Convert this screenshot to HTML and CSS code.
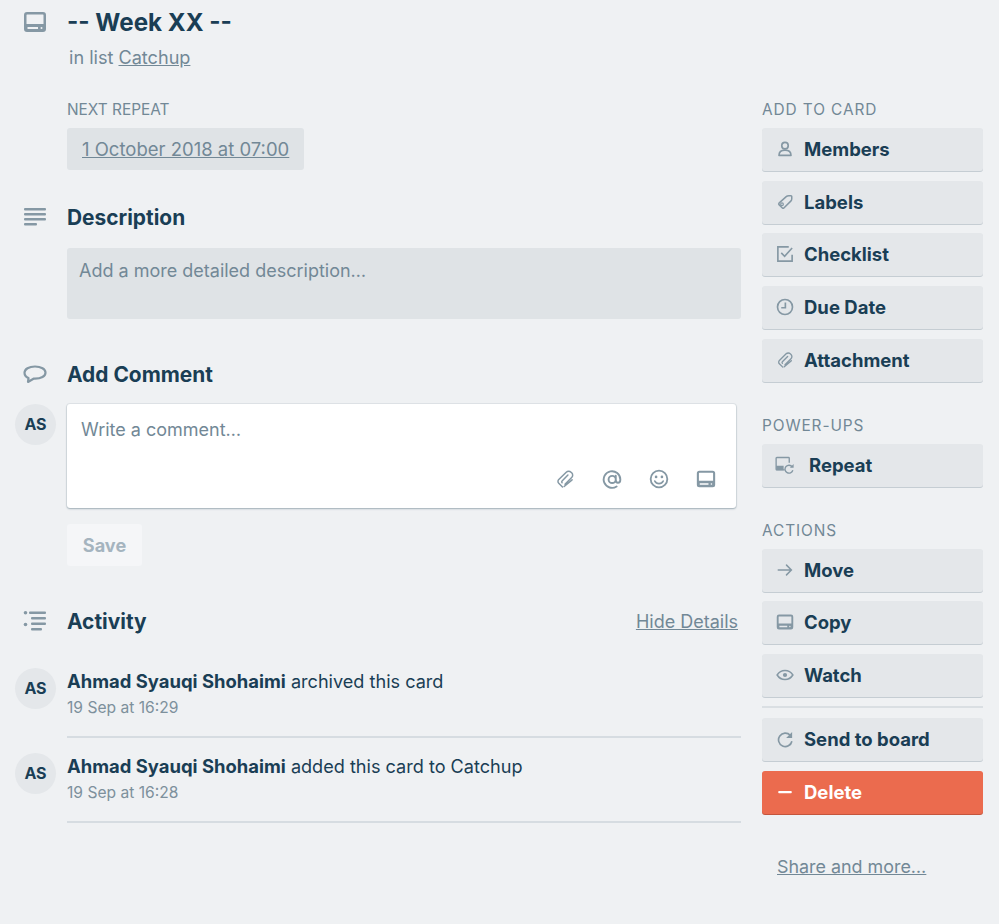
FILE: index.html
```html
<!DOCTYPE html>
<html lang="en">
<head>
    <meta charset="UTF-8">
    <meta name="viewport" content="width=device-width, initial-scale=1.0">
    <title>-- Week XX --</title>
    <link rel="stylesheet" href="styles.css">
</head>
<body>
    <svg class="defs" width="0" height="0">
        <symbol id="i-card" viewBox="0 0 24 24"><path fill-rule="evenodd" d="M4 2h16a3 3 0 0 1 3 3v14a3 3 0 0 1-3 3H4a3 3 0 0 1-3-3V5a3 3 0 0 1 3-3zm0 2.500a.5.5 0 0 0-.5.5v9h17V5a.5.500 0 0 0-.5-.5H4zM4.500 17v2h10.500v-2H4.500zM18.500 17a1 1 0 1 0 0 2 1 1 0 0 0 0-2z"/></symbol>
        <symbol id="i-clip" viewBox="0 0 24 24"><path fill="none" stroke="currentColor" stroke-width="1.800" stroke-linecap="round" d="M9 21.500l-4.500-4.500a3 3 0 0 1 0-4.300L13.500 3.800a4 4 0 0 1 5.700 0l.8.8a4 4 0 0 1 0 5.700l-8 8M8.500 16.500a1.600 1.600 0 0 1 0-2.200l7-7M11 21l9.500-8"/></symbol>
    </svg>

    <div class="window">
        <!-- Main column -->
        <div class="main">
            <div class="row title-row">
                <div class="gutter"><svg class="icon icon-lg"><use href="#i-card"/></svg></div>
                <div class="content">
                    <h1>-- Week XX --</h1>
                    <p class="in-list">in list <a href="#">Catchup</a></p>
                </div>
            </div>

            <div class="row repeat-row">
                <div class="gutter"></div>
                <div class="content">
                    <h3 class="label">NEXT REPEAT</h3>
                    <a href="#" class="date-btn">1 October 2018 at 07:00</a>
                </div>
            </div>

            <div class="row desc-row">
                <div class="gutter">
                    <svg class="icon icon-lg" viewBox="0 0 24 24"><rect x="1" y="3" width="22" height="2.400" rx="1"/><rect x="1" y="8" width="22" height="2.400" rx="1"/><rect x="1" y="13" width="22" height="2.400" rx="1"/><rect x="1" y="18" width="13" height="2.400" rx="1"/></svg>
                </div>
                <div class="content">
                    <h2>Description</h2>
                    <div class="fake-textarea">Add a more detailed description…</div>
                </div>
            </div>

            <div class="row comment-head">
                <div class="gutter">
                    <svg class="icon icon-lg" viewBox="0 0 24 24"><path fill="none" stroke="currentColor" stroke-width="2.200" stroke-linejoin="round" d="M12 4.500c-6 0-10.500 2.500-10.500 6.300 0 2.400 1.500 4.200 4 5.200l-.5 4 5.500-3.300H12c6 0 10.500-2.500 10.500-6 0-3.700-4.500-6.200-10.500-6.200z"/></svg>
                </div>
                <div class="content"><h2>Add Comment</h2></div>
            </div>

            <div class="row comment-row">
                <div class="gutter"><div class="avatar">AS</div></div>
                <div class="content">
                    <div class="comment-box">
                        <div class="placeholder">Write a comment…</div>
                        <div class="comment-tools">
                            <svg class="icon icon-tool"><use href="#i-clip"/></svg>
                            <svg class="icon icon-tool" viewBox="0 0 24 24"><path fill="none" stroke="currentColor" stroke-width="2.300" stroke-linecap="round" d="M17.500 21a10 10 0 1 1 4.500-8.500c0 2.500-1 4-2.800 4s-2.700-1.500-2.700-3.500V8M16.500 12.500a4.300 4.300 0 1 1-8.600 0 4.300 4.300 0 0 1 8.600 0z"/></svg>
                            <svg class="icon icon-tool" viewBox="0 0 24 24"><circle cx="12" cy="12" r="10" fill="none" stroke="currentColor" stroke-width="2.200"/><circle cx="8.500" cy="9.500" r="1.600"/><circle cx="15.500" cy="9.500" r="1.600"/><path fill="none" stroke="currentColor" stroke-width="2" stroke-linecap="round" d="M7 14.500c1 2 2.800 3 5 3s4-1 5-3"/></svg>
                            <svg class="icon icon-tool"><use href="#i-card"/></svg>
                        </div>
                    </div>
                    <button class="save-btn">Save</button>
                </div>
            </div>

            <div class="row activity-head">
                <div class="gutter">
                    <svg class="icon icon-lg" viewBox="0 0 24 24"><circle cx="2.500" cy="3.700" r="1.800"/><circle cx="2.500" cy="15.500" r="1.800"/><rect x="6" y="2.500" width="17" height="2.400" rx="1"/><rect x="8" y="8" width="15" height="2.400" rx="1"/><rect x="8" y="13.500" width="15" height="2.400" rx="1"/><rect x="8" y="19" width="11" height="2.400" rx="1"/></svg>
                </div>
                <div class="content activity-title">
                    <h2>Activity</h2>
                    <a href="#" class="muted-link">Hide Details</a>
                </div>
            </div>

            <div class="row entry">
                <div class="gutter"><div class="avatar">AS</div></div>
                <div class="content entry-body">
                    <p><b>Ahmad Syauqi Shohaimi</b> archived this card</p>
                    <p class="time">19 Sep at 16:29</p>
                </div>
            </div>
            <div class="row entry">
                <div class="gutter"><div class="avatar">AS</div></div>
                <div class="content entry-body">
                    <p><b>Ahmad Syauqi Shohaimi</b> added this card to Catchup</p>
                    <p class="time">19 Sep at 16:28</p>
                </div>
            </div>
        </div>

        <!-- Sidebar -->
        <div class="side">
            <h3 class="label side-label">ADD TO CARD</h3>
            <a href="#" class="btn"><svg class="icon" viewBox="0 0 24 24"><circle cx="12" cy="7.500" r="4.300" fill="none" stroke="currentColor" stroke-width="2.200"/><path fill="none" stroke="currentColor" stroke-width="2.200" stroke-linejoin="round" d="M4 20.500c0-4.500 3-7 8-7s8 2.500 8 7z"/></svg>Members</a>
            <a href="#" class="btn"><svg class="icon" viewBox="0 0 24 24"><path fill="none" stroke="currentColor" stroke-width="2" stroke-linejoin="round" d="M14 4.500c1-1 2-1 3-1l3 0c.5 0 1 .5 1 1v3c0 1 0 2-1 3l-9.500 9.500a1.500 1.500 0 0 1-2 0l-4.500-4.500a1.500 1.500 0 0 1 0-2z"/><circle cx="8" cy="15" r="1.800" fill="none" stroke="currentColor" stroke-width="1.600"/></svg>Labels</a>
            <a href="#" class="btn"><svg class="icon" viewBox="0 0 24 24"><path fill="none" stroke="currentColor" stroke-width="2.200" d="M21.500 13v8.500h-19v-19H17"/><path fill="none" stroke="currentColor" stroke-width="2.200" d="M7 10.500l4.500 4.500 10-11"/></svg>Checklist</a>
            <a href="#" class="btn"><svg class="icon" viewBox="0 0 24 24"><circle cx="12" cy="12" r="10" fill="none" stroke="currentColor" stroke-width="2.200"/><path fill="none" stroke="currentColor" stroke-width="2.200" d="M12.500 6v7H7"/></svg>Due Date</a>
            <a href="#" class="btn"><svg class="icon"><use href="#i-clip"/></svg>Attachment</a>

            <h3 class="label side-label section-gap">POWER-UPS</h3>
            <a href="#" class="btn btn-repeat"><svg class="icon icon-repeat" viewBox="0 0 28 24"><path fill="none" stroke="currentColor" stroke-width="1.800" d="M13 18.500H2.500a1 1 0 0 1-1-1V3a1 1 0 0 1 1-1h15.500a1 1 0 0 1 1 1v6"/><rect x="1.500" y="13" width="10" height="6"/><path fill="none" stroke="currentColor" stroke-width="1.800" d="M23 14.500a5.300 5.300 0 1 0 .8 4.500"/><path d="M24.800 10.500v5h-5z"/></svg>Repeat</a>

            <h3 class="label side-label section-gap">ACTIONS</h3>
            <a href="#" class="btn"><svg class="icon" viewBox="0 0 24 24"><path fill="none" stroke="currentColor" stroke-width="2" stroke-linecap="round" d="M3 12h17M14 5.500l6.500 6.500-6.500 6.500"/></svg>Move</a>
            <a href="#" class="btn"><svg class="icon"><use href="#i-card"/></svg>Copy</a>
            <a href="#" class="btn"><svg class="icon" viewBox="0 0 24 24"><path fill="none" stroke="currentColor" stroke-width="2" d="M1.500 12C4 8 7.500 6 12 6s8 2 10.500 6C20 16 16.500 18 12 18S4 16 1.500 12z"/><circle cx="12" cy="12" r="2.800"/></svg>Watch</a>
            <hr class="side-sep">
            <a href="#" class="btn"><svg class="icon" viewBox="0 0 24 24"><path fill="none" stroke="currentColor" stroke-width="2.200" d="M19 7a9 9 0 1 0 2.200 8"/><path d="M21.500 2.500v8h-8z"/></svg>Send to board</a>
            <a href="#" class="btn btn-danger"><svg class="icon" viewBox="0 0 24 24"><rect x="3" y="10.500" width="18" height="3.200" rx="1"/></svg>Delete</a>
            <a href="#" class="muted-link share-link">Share and more…</a>
        </div>
    </div>
</body>
</html>
```

FILE: styles.css
```css
/* Reset */
* {
    box-sizing: border-box;
    margin: 0;
    padding: 0;
}
body {
    font-family: Inter, "Noto Sans", sans-serif;
    font-size: 18.1px;
    line-height: 26px;
    color: #1a3e55;
    background-color: #eff1f3;
    overflow: hidden;
}
.defs {
    position: absolute;
}
a {
    color: inherit;
}
b {
    font-size: 18.450px;
    font-weight: 700;
}

/* Two columns */
.window {
    display: flex;
    gap: 21px;
    height: 924px;
}
.main {
    width: 741px;
}
.side {
    width: 221px;
    padding-top: 100px;
}

/* Rows with the icon gutter */
.row {
    display: flex;
}
.gutter {
    flex: none;
    width: 67px;
    padding-left: 15px;
}
.content {
    flex: 1;
    min-width: 0;
}
.icon {
    flex: none;
    display: block;
    width: 24px;
    height: 24px;
    fill: currentColor;
    color: #8598a4;
}
.icon-lg {
    margin-left: 8px;
}

/* Headings */
h1 {
    font-size: 24.2px;
    font-weight: 700;
    line-height: 32px;
}
h2 {
    font-size: 20.9px;
    font-weight: 700;
    line-height: 26px;
}
.label {
    font-size: 15.4px;
    font-weight: 400;
    line-height: 20px;
    color: #728896;
}
.side-label {
    letter-spacing: 0.9px;
    margin-bottom: 8px;
}
.section-gap {
    margin-top: 34px;
}

/* Title */
.title-row {
    padding-top: 7px;
}
.title-row .icon-lg {
    margin-top: 3px;
}
.in-list {
    margin-top: 5px;
    padding-left: 2px;
    color: #728896;
}

/* Next repeat */
.repeat-row {
    margin-top: 30px;
}
.repeat-row .label {
    margin-bottom: 8px;
}
.date-btn {
    display: inline-block;
    width: 237px;
    height: 42px;
    padding: 8px 15px;
    background-color: #dfe3e6;
    border-radius: 3px;
    font-size: 18.5px;
    white-space: nowrap;
    color: #728896;
}

/* Description */
.desc-row {
    margin-top: 35px;
}
.fake-textarea {
    margin-top: 17px;
    height: 71px;
    padding: 10px 12px;
    background-color: #dfe3e6;
    border-radius: 3px;
    font-size: 18px;
    color: #728896;
}

/* Comment */
.comment-head {
    margin-top: 43px;
}
.comment-row {
    margin-top: 16px;
}
.avatar {
    width: 41px;
    height: 41px;
    border-radius: 50%;
    background-color: #e4e7ea;
    font-size: 16px;
    font-weight: 700;
    line-height: 41px;
    text-align: center;
}
.comment-box {
    width: 669px;
    height: 104px;
    padding: 13px 20px 12px 14px;
    background-color: #fff;
    border-radius: 3px;
    box-shadow: 0 1px 2px rgba(9, 45, 66, 0.3), 0 0 0 1px rgba(9, 45, 66, 0.06);
    font-size: 18px;
    color: #728896;
}
.comment-tools {
    display: flex;
    justify-content: flex-end;
    gap: 27px;
    margin-top: 26px;
}
.icon-tool {
    width: 20px;
    height: 20px;
}
.save-btn {
    display: block;
    margin-top: 16px;
    width: 75px;
    height: 42px;
    border: 0;
    border-radius: 3px;
    background-color: #f5f6f8;
    font-family: inherit;
    font-size: 18.1px;
    font-weight: 700;
    color: #a5b4bf;
}

/* Activity */
.activity-head {
    margin-top: 43px;
}
.activity-title {
    display: flex;
    justify-content: space-between;
    padding-right: 3px;
}
.muted-link {
    font-size: 18px;
    color: #728896;
}
.entry {
    margin-top: 33px;
}
.entry + .entry {
    margin-top: 15px;
}
.entry-body {
    height: 70px;
    border-bottom: 2px solid #d6dce1;
}
.time {
    font-size: 15.6px;
    line-height: 22px;
    margin-top: 2.500px;
    color: #7d909c;
}

/* Sidebar buttons */
.btn {
    display: flex;
    align-items: center;
    gap: 10px;
    height: 43px;
    margin-bottom: 9.700px;
    padding: 0 0 1px 13px;
    background-color: #e4e7ea;
    border-radius: 3px;
    box-shadow: 0 1px 0 0 #c5cdd3;
    font-size: 18.5px;
    font-weight: 700;
    text-decoration: none;
}
.btn .icon {
    width: 18px;
    height: 18px;
    margin-left: 1px;
}
.btn-repeat {
    padding-left: 12px;
    gap: 13px;
}
.btn .icon-repeat {
    width: 21px;
}
.btn-danger {
    background-color: #eb6b4e;
    box-shadow: 0 1px 0 0 #c4553c;
    color: #fff;
}
.btn-danger .icon {
    color: #fff;
}
.side-sep {
    border: 0;
    border-top: 2px solid #dadfe3;
    margin: -1px 0 10px;
}
.share-link {
    display: block;
    margin-top: 40px;
    padding-left: 15px;
    font-size: 17.9px;
}
```
